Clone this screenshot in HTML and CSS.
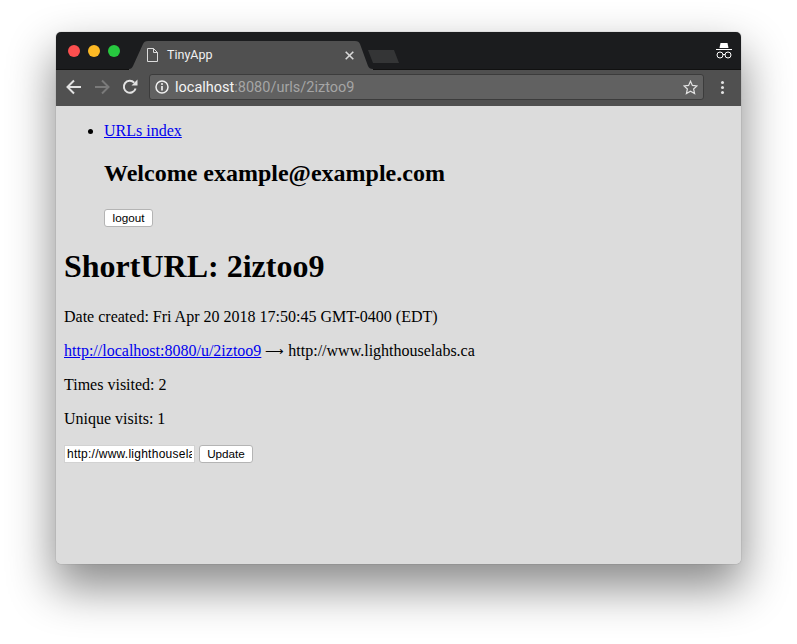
FILE: index.html
```html
<!DOCTYPE html>
<html lang="en">
<head>
<meta charset="utf-8">
<title>TinyApp</title>
<link rel="stylesheet" href="styles.css">
</head>
<body>
<div class="window">
  <div class="tabbar">
    <div class="lights">
      <span class="light red"></span><span class="light yellow"></span><span class="light green"></span>
    </div>
    <div class="tab">
      <svg class="tab-shape" width="244" height="29" viewBox="0 0 244 29"><path d="M0 28 C2 28 3 27 4 25 L14 3 C15 1 16 0 19 0 H226 C229 0 230 1 231 3 L239 25 C240 27 241 28 244 28 V29 H0 Z" fill="#505050"/></svg>
      <svg class="file-icon" width="11" height="14" viewBox="0 0 11 14"><path d="M.5 .5 H6.5 L10.5 4.5 V13.5 H.5 Z M6.5 .5 V4.5 H10.5" fill="none" stroke="#dcdcdc"/></svg>
      <span class="tab-title">TinyApp</span>
      <svg class="tab-close" width="9" height="9" viewBox="0 0 9 9"><path d="M.7 .7 L8.3 8.3 M8.3 .7 L.7 8.3" stroke="#d8d8d8" stroke-width="1.6"/></svg>
    </div>
    <svg class="newtab" width="32" height="15" viewBox="0 0 32 15"><path d="M0 1 H26 L31 14 H5 Z" fill="#343536"/></svg>
    <svg class="incognito" width="18" height="18" viewBox="0 0 18 18"><path d="M5.5 1 H12.5 L13.5 6 H4.5 Z" fill="#fff"/><path d="M1 7.5 H17" stroke="#fff" stroke-width="1.2"/><circle cx="5" cy="13" r="3" fill="none" stroke="#fff"/><circle cx="13" cy="13" r="3" fill="none" stroke="#fff"/><path d="M8 12.5 H10" stroke="#fff"/></svg>
  </div>
  <div class="toolbar">
    <svg class="nav-icon" width="16" height="16" viewBox="0 0 16 16"><path d="M15 8 H2 M8 1.5 L1.5 8 L8 14.5" fill="none" stroke="#e2e2e2" stroke-width="2"/></svg>
    <svg class="nav-icon" width="16" height="16" viewBox="0 0 16 16"><path d="M1 8 H14 M8 1.5 L14.5 8 L8 14.5" fill="none" stroke="#7a7a7a" stroke-width="2"/></svg>
    <svg class="nav-icon" width="16" height="16" viewBox="0 0 16 16"><path d="M13.6 9.5 A6 6 0 1 1 12.2 3.6" fill="none" stroke="#e2e2e2" stroke-width="2"/><path d="M9.5 6.5 H15.5 V.5 Z" fill="#e2e2e2"/></svg>
    <div class="omnibox">
      <svg class="info" width="14" height="14" viewBox="0 0 14 14"><circle cx="7" cy="7" r="6" fill="none" stroke="#f0f0f0" stroke-width="1.5"/><path d="M7 6 V10.6" stroke="#f0f0f0" stroke-width="1.7"/><circle cx="7" cy="3.9" r="1" fill="#f0f0f0"/></svg>
      <span class="url"><span class="host">localhost</span>:8080/urls/2iztoo9</span>
      <svg class="star" width="15" height="15" viewBox="0 0 15 15"><path d="M7.5 1.2 L9.4 5.4 L14 5.9 L10.6 9 L11.6 13.6 L7.5 11.2 L3.4 13.6 L4.4 9 L1 5.9 L5.6 5.4 Z" fill="none" stroke="#e2e2e2" stroke-width="1.2"/></svg>
    </div>
    <div class="menu-dots"><span></span><span></span><span></span></div>
  </div>
  <div class="page">
    <ul class="nav-list">
      <li>
        <a href="#">URLs index</a>
        <h2>Welcome example@example.com</h2>
        <form><button type="button" class="btn btn-logout">logout</button></form>
      </li>
    </ul>
    <h1>ShortURL: 2iztoo9</h1>
    <p>Date created: Fri Apr 20 2018 17:50:45 GMT-0400 (EDT)</p>
    <p><a href="#">http://localhost:8080/u/2iztoo9</a> <span class="arrow">⟶</span> http://www.lighthouselabs.ca</p>
    <p>Times visited: 2</p>
    <p class="last">Unique visits: 1</p>
    <form class="update-form">
      <input class="url-input" type="text" value="http://www.lighthouselabs.ca">
      <button type="button" class="btn btn-update">Update</button>
    </form>
  </div>
</div>
</body>
</html>
```

FILE: styles.css
```css
html, body { margin: 0; padding: 0; height: 644px; background: #fff; overflow: hidden; }
body { padding: 32px 0 0 56px; box-sizing: border-box; }

.window {
  width: 685px;
  height: 532px;
  border-radius: 5px;
  overflow: clip;
  display: flex;
  flex-direction: column;
  background: #dcdcdc;
  box-shadow: 0 22px 46px 2px rgba(0,0,0,.46), 0 0 1px 0 rgba(0,0,0,.5);
}

.tabbar {
  height: 37px;
  flex: none;
  background: #1b1c1e;
  display: flex;
  align-items: center;
  position: relative;
}
.lights { display: flex; gap: 8px; margin-left: 12px; width: 52px; flex: none; margin-top: 1px; }
.light { width: 12px; height: 12px; border-radius: 50%; flex: none; }
.red { background: #fc4f4f; }
.yellow { background: #fdb924; }
.green { background: #27c83f; }

.tab {
  position: absolute;
  left: 73px;
  top: 9px;
  width: 244px;
  height: 29px;
  display: flex;
  align-items: center;
  font: 12.5px "Roboto", "Liberation Sans", sans-serif;
  color: #f1f1f1;
}
.tab-shape { position: absolute; left: 0; top: 0; }
.file-icon { position: relative; margin-left: 18px; margin-top: -1px; flex: none; }
.tab-title { position: relative; margin-left: 9px; margin-top: -3px; }
.tab-close { position: absolute; left: 215.5px; top: 9.5px; }
.newtab { position: absolute; left: 312px; top: 17px; }
.incognito { position: absolute; right: 8px; top: 10px; }

.toolbar {
  height: 34px;
  padding-bottom: 2px;
  flex: none;
  background: #505050;
  border-top: 1px solid #111;
  display: flex;
  align-items: center;
  padding-left: 10px;
  gap: 12px;
}
.nav-icon { flex: none; }
.omnibox {
  flex: none;
  margin-left: -1px;
  width: 555px;
  height: 26px;
  box-sizing: border-box;
  background: #616161;
  border: 1px solid #3c3c3c;
  border-radius: 3px;
  display: flex;
  align-items: center;
  padding: 0 5px;
  font: 14.5px "Roboto", "Liberation Sans", sans-serif;
  color: #a5a5a5;
}
.info { flex: none; margin-right: 6px; }
.url { flex: 1; }
.host { color: #f4f4f4; }
.star { flex: none; }
.menu-dots { display: flex; flex-direction: column; gap: 2px; margin-left: 5px; }
.menu-dots span { width: 3px; height: 3px; border-radius: 50%; background: #e2e2e2; }

.page {
  flex: 1;
  padding: 0 8px;
  background: #dcdcdc;
  font: 16px/18px "Liberation Serif", serif;
  color: #000;
  overflow: hidden;
}
.nav-list { margin: 16px 0; padding-left: 40px; }
.page a { color: #00e; }
h2 { font-size: 24px; line-height: 27px; margin: 20px 0 22px; }
h1 { font-size: 32px; line-height: 37px; margin: 21px 0 23px; }
p { margin: 16px 0; }
p.last { margin-bottom: 17px; }
.arrow { font-size: 13.2px; line-height: 1px; }
form { margin: 0; }

.btn {
  display: inline-block;
  height: 18px;
  padding: 0;
  box-sizing: border-box;
  background: #fff;
  border: 1px solid #b4b4b4;
  border-radius: 3px;
  font: 11.7px/16px "Liberation Sans", sans-serif;
  color: #000;
  vertical-align: top;
}
.btn-logout { width: 49px; }
.btn-update { width: 54px; margin-left: 1px; }
.update-form { display: flex; gap: 3px; }
.url-input {
  width: 131px;
  height: 18px;
  box-sizing: border-box;
  padding: 0 2px;
  margin: 0;
  border: 1px solid #d2d2d2;
  background: #fff;
  font: 12px "Liberation Sans", sans-serif;
  letter-spacing: .25px;
  color: #000;
}
```
